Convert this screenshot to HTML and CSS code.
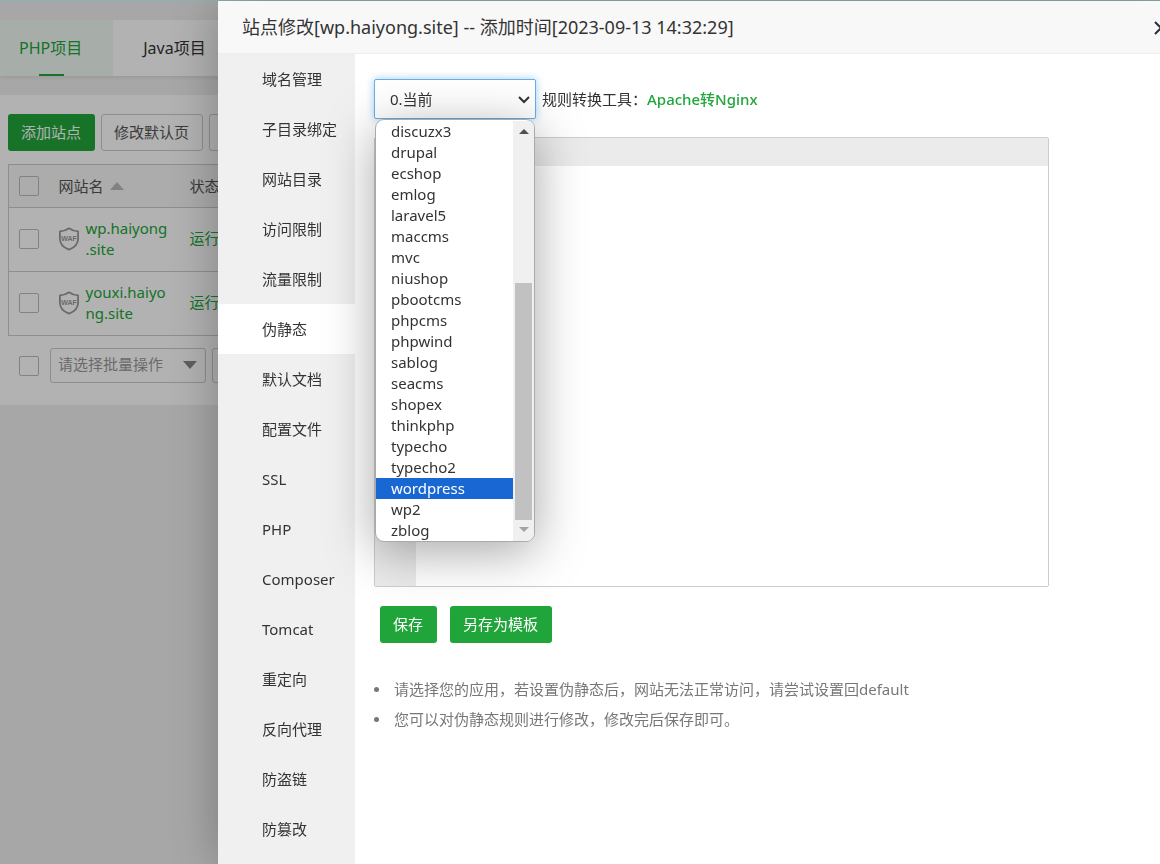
FILE: index.html
```html
<!DOCTYPE html>
<html lang="zh-CN">
<head>
<meta charset="utf-8">
<title>站点修改</title>
<link rel="stylesheet" href="styles.css">
</head>
<body>
<div class="page">
  <nav class="tabs">
    <a class="tab tab-active" href="#">PHP项目</a>
    <a class="tab" href="#">Java项目</a>
  </nav>
  <main class="sites">
    <div class="toolbar">
      <button class="btn btn-primary" type="button">添加站点</button>
      <button class="btn btn-plain" type="button">修改默认页</button>
      <button class="btn btn-plain" type="button" aria-label="更多"></button>
    </div>
    <table class="site-table">
      <thead>
        <tr>
          <th class="col-check"><input class="check" type="checkbox" aria-label="全选"></th>
          <th class="col-name"><span class="sort">网站名<svg width="14" height="8" viewBox="0 0 14 8"><path d="M0 8 7 0l7 8z" fill="#bbb"/></svg></span></th>
          <th>状态</th>
        </tr>
      </thead>
      <tbody>
        <tr>
          <td class="col-check"><input class="check" type="checkbox" aria-label="wp.haiyong.site"></td>
          <td class="col-name"><div class="site"><svg class="shield" width="20" height="24" viewBox="1 0 20 24"><path d="M11 1.3C8.5 3.2 5 4.2 1.9 4.4V11.5C1.9 17 5.500 20.600 11 22.700C16.500 20.600 20.100 17 20.100 11.500V4.400C17 4.200 13.500 3.200 11 1.300z" fill="none" stroke="#999" stroke-width="1.800" stroke-linejoin="round"/><text x="11" y="14" text-anchor="middle">WAF</text></svg><a class="link" href="#">wp.haiyong<wbr>.site</a></div></td>
          <td><a class="link" href="#">运行中</a></td>
        </tr>
        <tr>
          <td class="col-check"><input class="check" type="checkbox" aria-label="youxi.haiyong.site"></td>
          <td class="col-name"><div class="site"><svg class="shield" width="20" height="24" viewBox="1 0 20 24"><path d="M11 1.3C8.5 3.2 5 4.2 1.9 4.4V11.5C1.9 17 5.500 20.600 11 22.700C16.500 20.600 20.100 17 20.100 11.500V4.400C17 4.200 13.500 3.200 11 1.300z" fill="none" stroke="#999" stroke-width="1.800" stroke-linejoin="round"/><text x="11" y="14" text-anchor="middle">WAF</text></svg><a class="link" href="#">youxi.haiyong.site</a></div></td>
          <td><a class="link" href="#">运行中</a></td>
        </tr>
      </tbody>
    </table>
    <div class="batch">
      <input class="check" type="checkbox" aria-label="选择全部站点">
      <div class="batch-box">
        <select class="batch-select" aria-label="批量操作"><option>请选择批量操作</option></select>
        <svg class="batch-arrow" width="14" height="8" viewBox="0 0 14 8"><path d="M0 0h14L7 8z" fill="#888"/></svg>
      </div>
      <button class="btn btn-plain btn-batch" type="button" aria-label="批量执行"></button>
    </div>
  </main>
</div>
<div class="shade"></div>

<section class="dialog" role="dialog" aria-labelledby="dialog-title">
  <header class="dialog-head">
    <h1 class="dialog-title" id="dialog-title">站点修改[wp.haiyong.site] -- 添加时间[2023-09-13 14:32:29]</h1>
    <button class="close" type="button" aria-label="关闭"><svg width="14" height="14" viewBox="0 0 14 14"><path d="M1 1l12 12M13 1 1 13" stroke="#2e2d3c" stroke-width="2"/></svg></button>
  </header>
  <div class="dialog-body">
    <nav class="menu">
      <a class="menu-item" href="#">域名管理</a>
      <a class="menu-item" href="#">子目录绑定</a>
      <a class="menu-item" href="#">网站目录</a>
      <a class="menu-item" href="#">访问限制</a>
      <a class="menu-item" href="#">流量限制</a>
      <a class="menu-item menu-active" href="#">伪静态</a>
      <a class="menu-item" href="#">默认文档</a>
      <a class="menu-item" href="#">配置文件</a>
      <a class="menu-item" href="#">SSL</a>
      <a class="menu-item" href="#">PHP</a>
      <a class="menu-item" href="#">Composer</a>
      <a class="menu-item" href="#">Tomcat</a>
      <a class="menu-item" href="#">重定向</a>
      <a class="menu-item" href="#">反向代理</a>
      <a class="menu-item" href="#">防盗链</a>
      <a class="menu-item" href="#">防篡改</a>
    </nav>
    <div class="panel">
      <div class="rule-row">
        <div class="rule-box">
          <select class="rule-select" aria-label="伪静态规则"><option>0.当前</option></select>
          <svg class="chevron" width="12" height="8" viewBox="0 0 12 8"><path d="M1 1l5 5 5-5" fill="none" stroke="#333" stroke-width="2"/></svg>
          <div class="popup">
            <ul class="options" role="listbox" aria-label="规则模板">
              <li class="option" role="option">discuzx3</li>
              <li class="option" role="option">drupal</li>
              <li class="option" role="option">ecshop</li>
              <li class="option" role="option">emlog</li>
              <li class="option" role="option">laravel5</li>
              <li class="option" role="option">maccms</li>
              <li class="option" role="option">mvc</li>
              <li class="option" role="option">niushop</li>
              <li class="option" role="option">pbootcms</li>
              <li class="option" role="option">phpcms</li>
              <li class="option" role="option">phpwind</li>
              <li class="option" role="option">sablog</li>
              <li class="option" role="option">seacms</li>
              <li class="option" role="option">shopex</li>
              <li class="option" role="option">thinkphp</li>
              <li class="option" role="option">typecho</li>
              <li class="option" role="option">typecho2</li>
              <li class="option option-on" role="option" aria-selected="true">wordpress</li>
              <li class="option" role="option">wp2</li>
              <li class="option" role="option">zblog</li>
            </ul>
            <div class="track">
              <svg width="10" height="5" viewBox="0 0 10 5"><path d="M0 5l5-5 5 5z" fill="#505050"/></svg>
              <div class="thumb"></div>
              <svg width="10" height="5" viewBox="0 0 10 5"><path d="M0 0h10L5 5z" fill="#a3a3a3"/></svg>
            </div>
          </div>
        </div>
        <span>规则转换工具：<a class="tool-link" href="#">Apache转Nginx</a></span>
      </div>
      <div class="editor">
        <div class="editor-top"></div>
        <div class="editor-main">
          <div class="gutter"></div>
          <textarea class="code" aria-label="伪静态规则内容"></textarea>
        </div>
      </div>
      <div class="actions">
        <button class="btn btn-primary" type="button">保存</button>
        <button class="btn btn-primary" type="button">另存为模板</button>
      </div>
      <ul class="notes">
        <li class="note">请选择您的应用，若设置伪静态后，网站无法正常访问，请尝试设置回default</li>
        <li class="note">您可以对伪静态规则进行修改，修改完后保存即可。</li>
      </ul>
    </div>
  </div>
</section>
</body>
</html>
```
FILE: styles.css
```css
* {
  box-sizing: border-box;
}

body {
  margin: 0;
  height: 100vh;
  overflow: hidden;
  background: #f0f0f0;
  color: #333;
  font: 15px/21px "Noto Sans", "Noto Sans CJK SC", sans-serif;
}

a {
  color: inherit;
  text-decoration: none;
}

button,
input,
select,
textarea {
  margin: 0;
  font: inherit;
  color: inherit;
}

.page {
  padding-top: 20px;
}

.tabs {
  display: flex;
  height: 56px;
  background: #fff;
  box-shadow: 0 2px 4px rgba(0, 0, 0, 0.08);
}

.tab {
  position: relative;
  padding: 0 30px;
  font-size: 16px;
  line-height: 56px;
}

.tab-active {
  padding: 0 31px 0 19px;
  background: #f0f9f4;
  color: #20a53a;
}

.tab-active::after {
  content: "";
  position: absolute;
  left: 39px;
  bottom: 0;
  width: 25px;
  height: 2px;
  background: #20a53a;
}

.sites {
  margin-top: 19px;
  padding: 19px 8px 22px;
  background: #fff;
}

.toolbar {
  display: flex;
  gap: 6px;
  margin-bottom: 13px;
}

.btn {
  height: 37px;
  padding: 0 13px 0 12px;
  border: 1px solid transparent;
  border-radius: 3px;
  white-space: nowrap;
}

.btn-primary {
  background: #20a53a;
  color: #fff;
}

.btn-plain {
  min-width: 60px;
  border-color: #ccc;
  background: #fff;
  color: #555;
}

.site-table {
  width: 100%;
  table-layout: fixed;
  border: 1px solid #ccc;
  border-collapse: collapse;
  color: #555;
}

.site-table th {
  height: 43px;
  padding: 0 8px;
  background: #f6f6f6;
  font-weight: normal;
  text-align: left;
}

.site-table td {
  height: 64px;
  padding: 0 8px 2px;
}

.site-table tr {
  border-bottom: 1px solid #ccc;
}

.site-table .col-check {
  width: 42px;
  padding-left: 10px;
  padding-right: 0;
}

.site-table .col-name {
  width: 131px;
}

.sort {
  display: flex;
  align-items: center;
  gap: 6px;
}

.site {
  display: flex;
  align-items: center;
  gap: 7px;
}

.shield {
  flex: none;
}

.shield text {
  fill: #999;
  font: bold 7px "Liberation Sans", sans-serif;
}

.link {
  color: #20a53a;
  overflow-wrap: anywhere;
}

.check {
  appearance: none;
  display: block;
  width: 20px;
  height: 20px;
  border: 1px solid #bbb;
  border-radius: 2px;
}

.batch {
  display: flex;
  align-items: center;
  gap: 6px;
  margin-top: 12px;
  padding-left: 11px;
}

.batch-box {
  position: relative;
  margin-left: 5px;
}

.batch-select {
  appearance: none;
  width: 156px;
  height: 35px;
  padding: 0 7px 2px;
  border: 1px solid #ccc;
  border-radius: 3px;
  background: #fff;
  color: #999;
}

.batch-arrow {
  position: absolute;
  right: 9px;
  top: 13px;
}

.btn-batch {
  height: 35px;
}

.shade {
  position: fixed;
  inset: 0;
  background: rgba(0, 0, 0, 0.3);
  border-top: 1px solid #8fb4b7;
}

.dialog {
  position: fixed;
  top: 1px;
  bottom: 0;
  left: 218px;
  right: -22px;
  display: flex;
  flex-direction: column;
  background: #fff;
  box-shadow: 1px 1px 50px rgba(0, 0, 0, 0.3);
}

.dialog-head {
  display: flex;
  align-items: center;
  justify-content: space-between;
  height: 53px;
  padding: 0 14px 0 24px;
  border-bottom: 1px solid #eee;
  background: #f8f8f8;
}

.dialog-title {
  margin: 0;
  font-size: 18px;
  font-weight: normal;
}

.close {
  display: flex;
  padding: 2px 0 0;
  border: 0;
  background: none;
}

.dialog-body {
  display: flex;
  flex: 1;
  min-height: 0;
}

.menu {
  flex: none;
  width: 137px;
  background: #f0f0f0;
}

.menu-item {
  display: block;
  padding-left: 44px;
  line-height: 50px;
}

.menu-active {
  background: #fff;
}

.panel {
  flex: 1;
  padding: 25px 133px 0 19px;
}

.rule-row {
  display: flex;
  align-items: center;
  gap: 6px;
}

.rule-box {
  position: relative;
}

.rule-select {
  appearance: none;
  display: block;
  width: 162px;
  height: 40px;
  padding: 0 15px;
  border: 1px solid #66afe9;
  border-radius: 2px;
  background: #fff;
  box-shadow: 0 0 8px rgba(102, 175, 233, 0.6);
}

.chevron {
  position: absolute;
  right: 6px;
  top: 17px;
}

.popup {
  position: absolute;
  z-index: 1;
  top: 40px;
  left: 1px;
  right: 1px;
  display: flex;
  padding-top: 1px;
  border: 1px solid #aaa;
  border-radius: 9px;
  background: #fff;
  box-shadow: 0 10px 50px rgba(0, 0, 0, 0.35);
  overflow: hidden;
}

.options {
  flex: 1;
  margin: 0;
  padding: 0;
  list-style: none;
}

.option {
  padding-left: 15px;
}

.option-on {
  background: #1967d2;
  color: #fff;
}

.track {
  display: flex;
  flex-direction: column;
  align-items: center;
  width: 21px;
  padding: 8px 2px 9px;
  background: #f0f0f0;
}

.thumb {
  width: 17px;
  height: 237px;
  margin-top: auto;
  margin-bottom: 7px;
  background: #c1c1c1;
}

.tool-link {
  color: #20a53a;
  font-weight: 500;
}

.editor {
  margin-top: 18px;
  border: 1px solid #ccc;
  border-radius: 2px;
}

.editor-top {
  height: 28px;
  background: #ebebeb;
}

.editor-main {
  display: flex;
  height: 420px;
}

.gutter {
  width: 41px;
  background: #ebebeb;
}

.code {
  flex: 1;
  border: 0;
  resize: none;
  outline: 0;
  background: #fff;
}

.actions {
  display: flex;
  gap: 13px;
  margin-top: 19px;
  padding-left: 6px;
}

.notes {
  margin: 31px 0 0;
  padding: 0;
  color: #777;
  line-height: 30px;
  list-style: none;
}

.note {
  display: flex;
  align-items: center;
  gap: 15px;
}

.note::before {
  content: "";
  width: 5px;
  height: 5px;
  border-radius: 50%;
  background: #777;
}
```
